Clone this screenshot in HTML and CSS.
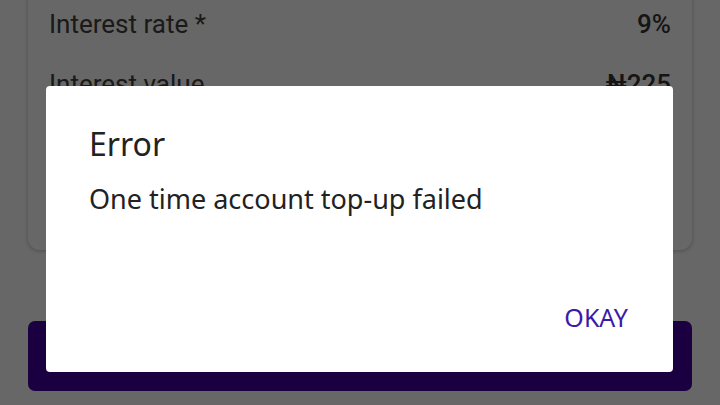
FILE: index.html
```html
<!DOCTYPE html>
<html>
<head>
<meta charset="utf-8">
<link rel="stylesheet" href="styles.css">
</head>
<body>
<div class="page">
  <div class="card">
    <div class="row"><span class="label">Interest rate *</span><span class="value">9%</span></div>
    <div class="row"><span class="label">Interest value</span><span class="value">₦225</span></div>
    <div class="row"><span class="label">Total payout</span><span class="value">₦2,725</span></div>
  </div>
  <div class="button">CONTINUE</div>
</div>
<div class="scrim"></div>
<div class="dialog">
  <div class="title">Error</div>
  <div class="message">One time account top-up failed</div>
  <div class="actions"><span class="okay">OKAY</span></div>
</div>
</body>
</html>
```
FILE: styles.css
```css
html, body {
  margin: 0;
  padding: 0;
  width: 720px;
  height: 405px;
  overflow: hidden;
  background: #ffffff;
  font-family: Roboto, "Liberation Sans", sans-serif;
}
.page {
  display: flex;
  flex-direction: column;
  padding: 0 28px;
}
.card {
  margin-top: -30px;
  background: #ffffff;
  border-radius: 12px;
  box-shadow: 0 1px 4px rgba(0,0,0,0.25);
  padding: 24px 21px 60px 21px;
  height: 196px;
}
.row {
  display: flex;
  justify-content: space-between;
  align-items: center;
  height: 60px;
  font-size: 26px;
  color: #404040;
}
.value {
  font-weight: 500;
  color: #363636;
}
.button {
  margin-top: 71px;
  height: 70px;
  border-radius: 7px;
  background: #42009f;
  color: #fff;
  display: flex;
  align-items: center;
  justify-content: center;
  font-size: 20px;
}
.scrim {
  position: absolute;
  left: 0; top: 0;
  width: 720px; height: 405px;
  background: rgba(0,0,0,0.596);
}
.dialog {
  position: absolute;
  left: 46px;
  top: 86px;
  width: 627px;
  height: 286px;
  box-sizing: border-box;
  background: #fff;
  border-radius: 4px;
  padding: 38px 45px 0 43px;
  display: flex;
  flex-direction: column;
  font-family: "Noto Sans", "Open Sans", sans-serif;
  color: #222;
}
.title {
  font-size: 32px;
  line-height: 40px;
}
.message {
  font-size: 27px;
  line-height: 32px;
  margin-top: 19px;
}
.actions {
  margin-top: auto;
  margin-bottom: 39px;
  display: flex;
  justify-content: flex-end;
}
.okay {
  font-size: 25px;
  color: #3d1aa6;
  line-height: 32px;
}
```
